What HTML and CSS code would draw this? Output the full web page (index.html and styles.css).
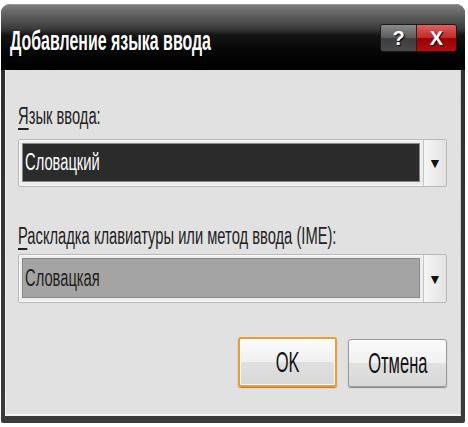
FILE: index.html
```html
<!DOCTYPE html>
<html lang="ru">
<head>
    <meta charset="UTF-8">
    <title>Добавление языка ввода</title>
    <link rel="stylesheet" href="styles.css">
</head>
<body>
    <div class="window">
        <div class="titlebar">
            <span class="title sx">Добавление языка ввода</span>
            <div class="caption-btns">
                <span class="cbtn help">?</span>
                <span class="cbtn close">X</span>
            </div>
        </div>

        <div class="content">
            <div class="label first"><span class="sx"><u>Я</u>зык ввода:</span></div>
            <div class="combo">
                <div class="field dark"><span class="sx">Словацкий</span></div>
                <div class="arrow">&#9660;</div>
            </div>

            <div class="label second"><span class="sx"><u>Р</u>аскладка клавиатуры или метод ввода (IME):</span></div>
            <div class="combo">
                <div class="field gray"><span class="sx">Словацкая</span></div>
                <div class="arrow">&#9660;</div>
            </div>

            <div class="actions">
                <div class="btn ok"><span class="sx">OK</span></div>
                <div class="btn cancel"><span class="sx">Отмена</span></div>
            </div>
        </div>
    </div>
</body>
</html>
```

FILE: styles.css
```css
body {
    margin: 0;
    background: #fff;
    font-family: "Liberation Sans", Arial, sans-serif;
}

/* text in the shot is squeezed horizontally */
.sx {
    display: inline-block;
    transform: scaleX(0.64);
    transform-origin: left center;
    white-space: nowrap;
}

.window {
    box-sizing: border-box;
    width: 464px;
    height: 419px;
    margin: 4px 0 0 1px;
    padding: 0 4px 7px 4px;
    background: linear-gradient(#2e2e2e, #3a3a3a);
    border-radius: 9px 9px 2px 2px;
    display: flex;
    flex-direction: column;
}

.titlebar {
    height: 66px;
    margin: 0 -4px;
    padding: 0 8px 0 9px;
    border-radius: 9px 9px 0 0;
    border-top: 1px solid #9a9a9a;
    background: linear-gradient(#7c7c7c 0, #5a5a5a 12px, #3a3a3a 24px, #141414 30px, #070707 45px, #000 100%);
    display: flex;
    align-items: center;
    justify-content: space-between;
    box-sizing: border-box;
}

.title.sx {
    color: #fff;
    font-weight: bold;
    font-size: 27px;
    transform: scaleX(0.59);
    text-shadow: 1px 1px 1px #000;
    margin-top: 7px;
}

.caption-btns {
    display: flex;
    margin-top: 1px;
    border: 1px solid #1a1a1a;
    border-radius: 3px;
    overflow: hidden;
}

.cbtn {
    height: 26px;
    line-height: 26px;
    color: #fff;
    font-weight: bold;
    font-size: 20px;
    text-align: center;
    text-shadow: 1px 1px 1px #000;
}
.cbtn.help {
    width: 35px;
    background: linear-gradient(#8a8a8a, #5a5a5a 50%, #3e3e3e 51%, #4a4a4a);
    border-right: 1px solid #222;
}
.cbtn.close {
    width: 39px;
    background: linear-gradient(#e06060, #c02828 50%, #9a0000 51%, #b01010);
}

.content {
    flex: 1;
    overflow: hidden;
    background: #e1e1e1;
    border-left: 1px solid #efefef;
    border-bottom: 2px solid #f4f4f4;
    border-right: 1px solid #c8c8c8;
    padding: 0 13px 0 12px;
    font-size: 23px;
    color: #222;
}

.label {
    line-height: 26px;
}
.label.first { margin-top: 33px; }
.label.second { margin-top: 36px; }
.label u { text-underline-offset: 4px; }

.combo {
    height: 48px;
    box-sizing: border-box;
    margin-top: 10px;
    border: 1px solid #b8b8b8;
    border-radius: 2px;
    background: #ededed;
    padding: 3px 0 4px 3px;
    display: flex;
    box-shadow: inset 0 0 0 1px #fafafa;
}
.label.second + .combo { margin-top: 5px; height: 49px; }

.field {
    flex: 1;
    display: flex;
    align-items: center;
    padding-left: 2px;
    border: 1px solid #8a8a8a;
}
.field.dark {
    background: #2b2b2b;
    color: #fff;
}
.field.gray {
    background: #a4a4a4;
    color: #1e1e1e;
}

.arrow {
    width: 22px;
    margin: -3px 0 -4px 3px;
    border-left: 1px solid #c4c4c4;
    background: linear-gradient(90deg, #f6f6f6, #e2e2e2);
    font-size: 14px;
    color: #111;
    display: flex;
    align-items: center;
    justify-content: center;
}

.actions {
    display: flex;
    justify-content: flex-end;
    gap: 11px;
    margin-top: 36px;
}

.btn {
    width: 99px;
    height: 48px;
    box-sizing: border-box;
    border: 1px solid #9a9a9a;
    border-radius: 3px;
    background: linear-gradient(#fbfbfb, #f0f0f0 50%, #e0e0e0 51%, #d8d8d8);
    display: flex;
    align-items: center;
    justify-content: center;
    font-size: 30px;
    color: #111;
    box-shadow: 0 1px 1px #888;
}
.btn .sx {
    transform-origin: center;
    transform: scaleX(0.55);
}
.btn.ok {
    height: 50px;
    margin-top: -2px;
    border: 2px solid #eb9a3c;
    box-shadow: inset 0 0 0 1px #fff, 0 1px 1px #c07020;
}
```
